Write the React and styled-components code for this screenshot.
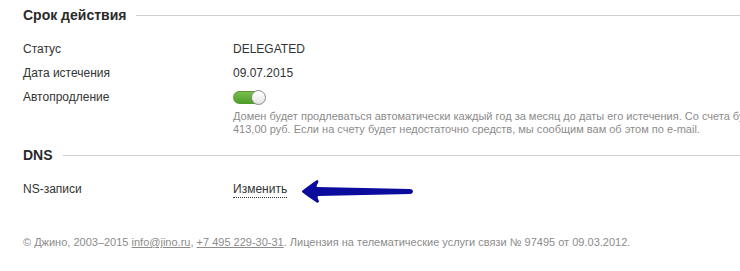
import { createGlobalStyle } from "styled-components";
import styled from "styled-components";

const GlobalStyle = createGlobalStyle`
  html, body {
    margin: 0;
    padding: 0;
    background: #fff;
    overflow: hidden;
  }
  body {
    font-family: "Liberation Sans", Arial, sans-serif;
    color: #333;
  }
`;

const Page = styled.div`
  width: 740px;
  padding: 5px 0 0 23px;
  box-sizing: border-box;
`;

const Section = styled.section`
  margin-bottom: ${(p) => p.$gap || 0}px;
`;

const Heading = styled.div`
  display: flex;
  align-items: center;
  gap: 10px;
  height: 20px;
  font-size: 14px;
  font-weight: bold;
  color: #2a2a2a;
  margin-bottom: 12px;
  white-space: nowrap;

  &::after {
    content: "";
    flex: 1;
    height: 1px;
    background: #cfcfcf;
  }
`;

const Row = styled.div`
  position: relative;
  display: grid;
  grid-template-columns: 210px 1fr;
  align-items: center;
  height: ${(p) => p.$h || 24}px;
  font-size: 12px;
  color: #333;
`;

const Label = styled.div`
  white-space: nowrap;
`;

const Value = styled.div`
  white-space: nowrap;
`;

const Toggle = styled.div`
  position: relative;
  width: 32px;
  height: 13px;
  margin-top: 1px;
  border-radius: 7px;
  background: linear-gradient(#7cc34f, #4d9a2a);
  box-shadow: inset 0 1px 1px rgba(0, 0, 0, 0.25);

  &::after {
    content: "";
    position: absolute;
    right: -1px;
    top: -1px;
    width: 13px;
    height: 13px;
    border-radius: 50%;
    background: linear-gradient(#ffffff, #e6e6e6);
    border: 1px solid #8a8a8a;
  }
`;

const Note = styled.div`
  margin: 1px 0 0 210px;
  font-size: 11px;
  line-height: 13px;
  color: #8c8c8c;
  white-space: nowrap;
`;

const EditLink = styled.a`
  color: #333;
  text-decoration: none;
  border-bottom: 1px dotted #333;
  padding-bottom: 1px;
  cursor: pointer;
`;

const Arrow = styled.svg`
  position: absolute;
  left: 277px;
  top: 1px;
`;

const Footer = styled.footer`
  margin-top: 35px;
  font-size: 11px;
  color: #8c8c8c;
  white-space: nowrap;

  a {
    color: #8c8c8c;
    text-decoration: underline;
  }
`;

export default function App() {
  return (
    <>
      <GlobalStyle />
      <Page>
        <Section $gap={9}>
          <Heading>Срок действия</Heading>
          <Row>
            <Label>Статус</Label>
            <Value>DELEGATED</Value>
          </Row>
          <Row>
            <Label>Дата истечения</Label>
            <Value>09.07.2015</Value>
          </Row>
          <Row>
            <Label>Автопродление</Label>
            <Toggle />
          </Row>
          <Note>
            Домен будет продлеваться автоматически каждый год за месяц до даты его истечения. Со счета будет списано
            <br />
            413,00 руб. Если на счету будет недостаточно средств, мы сообщим вам об этом по e-mail.
          </Note>
        </Section>
        <Section>
          <Heading>DNS</Heading>
          <Row>
            <Label>NS-записи</Label>
            <Value>
              <EditLink>Изменить</EditLink>
            </Value>
            <Arrow width="118" height="26" viewBox="0 0 118 26">
              <path
                d="M2 13 C7 9 12 5 17 2 C18 2 19 3 18 5 C17 7 16 8 17 9 L110 11 C114 11.5 114 15.5 110 16 L18 18 C17 19 18 21 19 23 C19 25 17 25 16 24 C11 21 6 17 2 14 Z"
                fill="#0b0b9e"
              />
            </Arrow>
          </Row>
        </Section>
        <Footer>
          © Джино, 2003–2015 <a>info@jino.ru</a>, <a>+7 495 229-30-31</a>. Лицензия на телематические услуги связи № 97495 от 09.03.2012.
        </Footer>
      </Page>
    </>
  );
}
